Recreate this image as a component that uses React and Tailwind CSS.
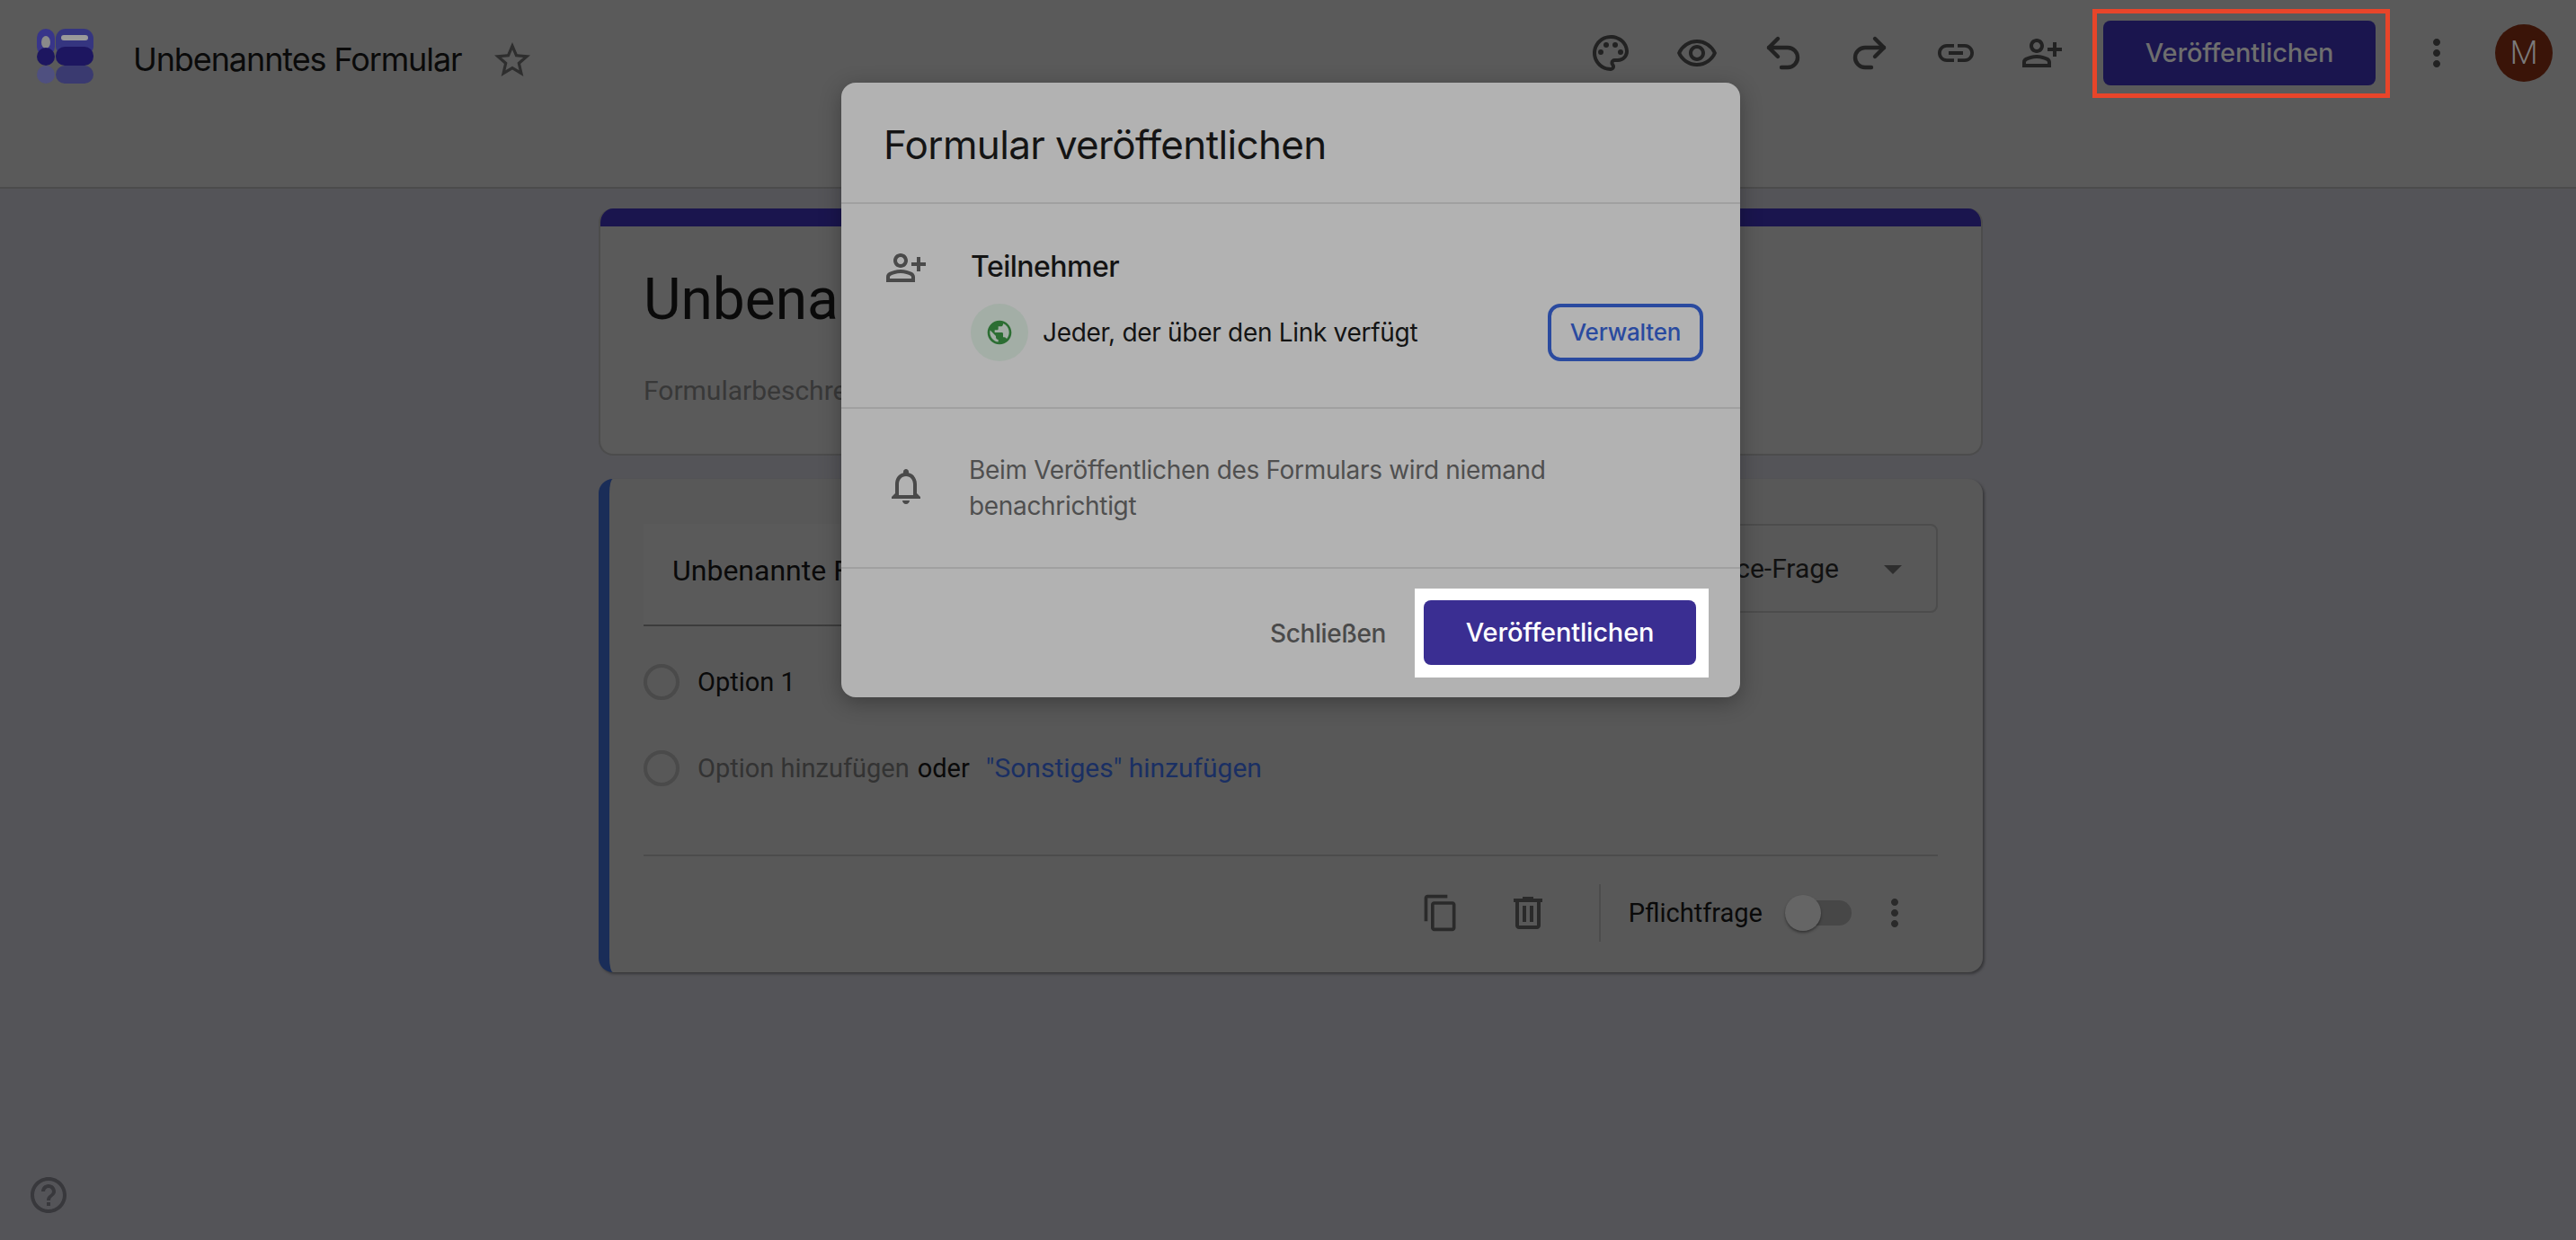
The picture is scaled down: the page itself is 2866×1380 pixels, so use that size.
import React from 'react';
import { Undo2, Redo2 } from 'lucide-react';
import {
  MdOutlinePalette,
  MdOutlineRemoveRedEye,
  MdLink,
  MdOutlinePersonAddAlt,
  MdMoreVert,
  MdStarBorder,
  MdOutlineContentCopy,
  MdOutlineNotifications,
  MdPublic,
  MdHelpOutline,
  MdArrowDropDown,
} from 'react-icons/md';

const sansHead = "font-['Inter','Liberation_Sans',sans-serif]";
const roboto = "font-['Roboto','Liberation_Sans',sans-serif]";

const Logo = () => (
  <svg width="63" height="61" viewBox="0 0 63 61" className="shrink-0">
    <rect x="0" y="0" width="20" height="30" rx="10" fill="#38358a" />
    <ellipse cx="10" cy="15" rx="5" ry="7" fill="#8a8a8a" />
    <rect x="21" y="0" width="42" height="30" rx="11" fill="#353580" />
    <rect x="27" y="7" width="30" height="6" rx="3" fill="#9a9a9a" />
    <rect x="0" y="21" width="20" height="20" rx="10" fill="#1d1660" />
    <rect x="21" y="20" width="42" height="21" rx="10" fill="#1d1660" />
    <rect x="0" y="41" width="20" height="20" rx="10" fill="#4f5080" />
    <rect x="21" y="41" width="42" height="20" rx="10" fill="#3a3a70" />
  </svg>
);

const TrashIcon = ({ className }) => (
  <svg width="48" height="48" viewBox="0 0 24 24" fill="currentColor" className={className}>
    <path d="M15 4V3H9v1H4v2h1v13c0 1.1.9 2 2 2h10c1.1 0 2-.9 2-2V6h1V4h-5zm2 15H7V6h10v13zM9 8h2v9H9zm4 0h2v9h-2z" />
  </svg>
);

const Radio = () => <div className="w-[40px] h-[40px] rounded-full border-[4px] border-[#4a4a4a] shrink-0" />;

export default function App() {
  return (
    <div className={`relative h-[1380px] w-full overflow-hidden bg-[#545458] ${roboto}`}>
      {/* Header */}
      <header className="flex items-center h-[210px] pb-[90px] bg-[#5a5a5a] border-b-2 border-[#4c4c4c]">
        <div className="ml-[41px] mt-[6px]">
          <Logo />
        </div>
        <span className={`ml-[44px] mt-[14px] text-[36px] leading-[48px] tracking-[-1.1px] text-[#0a0a0a] ${sansHead}`}>
          Unbenanntes Formular
        </span>
        <MdStarBorder className="ml-[32px] mt-[16px] text-[#2e2e2e]" size={48} />

        <div className="ml-auto flex items-center gap-[48px] text-[#222222]">
          <MdOutlinePalette size={48} />
          <MdOutlineRemoveRedEye size={48} />
          <Undo2 size={48} strokeWidth={2.2} />
          <Redo2 size={48} strokeWidth={2.2} />
          <MdLink size={48} />
          <MdOutlinePersonAddAlt size={48} />
        </div>
        <div className="ml-[32px] pl-[7px] pr-[11px] pt-[8px] pb-[9px] border-[5px] border-[#e8452a]">
          <button className={`w-[303px] h-[72px] rounded-[8px] bg-[#1a154e] text-[#6e6e6e] text-[29px] font-medium tracking-[-0.15px] ${sansHead}`}>
            Veröffentlichen
          </button>
        </div>
        <MdMoreVert className="ml-[28px] text-[#222222]" size={48} />
        <div className="ml-[41px] mr-[26px] w-[64px] h-[64px] rounded-full bg-[#3a1408] text-[#7a7a7a] text-[36px] font-light flex items-center justify-center">
          M
        </div>
      </header>

      {/* Form title card */}
      <section className="ml-[666px] w-[1540px] mt-[22px] h-[275px] rounded-[16px] overflow-hidden bg-[#5a5a5a] border-2 border-t-0 border-[#4c4c4c]">
        <div className="h-[20px] -mx-[2px] bg-[#1a154e]" />
        <div className="pl-[48px] pt-[42px]">
          <h1 className="text-[64px] leading-[80px] text-[#0a0a0a]">Unbenanntes Formular</h1>
          <p className="mt-[41px] text-[30px] leading-[40px] text-[#383838]">Formularbeschreibung</p>
        </div>
      </section>

      {/* Question card */}
      <section className="ml-[666px] w-[1540px] mt-[26px] h-[549px] rounded-[16px] bg-[#585858] border-l-[12px] border-l-[#1a2d58] pl-[38px] pr-[50px] pt-[50px] shadow-[2px_2px_3px_rgba(0,0,0,0.35)]">
        <div className="flex gap-[24px] items-start">
          <div className="flex-1 h-[114px] pl-[32px] pb-[8px] flex items-center bg-[#5a5a5a] border-b-2 border-[#3c3c3c] text-[32px] text-[#0a0a0a]">
            Unbenannte Frage
          </div>
          <div className="w-[456px] h-[99px] pr-[24px] flex items-center justify-end gap-[36px] rounded-[8px] border-2 border-[#4c4c4c] text-[30px] text-[#111111]">
            Multiple-Choice-Frage
            <MdArrowDropDown size={48} className="text-[#2e2e2e]" />
          </div>
        </div>

        <div className="mt-[42px] flex items-center gap-[20px] text-[29px] leading-[40px] text-[#0a0a0a]">
          <Radio />
          Option 1
        </div>
        <div className="mt-[56px] flex items-center text-[29px] leading-[40px]">
          <Radio />
          <span className="ml-[20px] text-[#333333]">Option hinzufügen</span>
          <span className="ml-[9px] text-[#0a0a0a]">oder</span>
          <span className="ml-[18px] text-[#1a2f63] text-[30px]">"Sonstiges" hinzufügen</span>
        </div>

        <div className="mt-[76px] h-[2px] bg-[#4c4c4c]" />

        <div className="mt-[31px] mr-[24px] flex items-center justify-end">
          <MdOutlineContentCopy size={44} className="text-[#2a2a2a]" />
          <TrashIcon className="ml-[51px] text-[#2a2a2a]" />
          <div className="ml-[55px] w-[2px] h-[64px] bg-[#4c4c4c]" />
          <span className="ml-[31px] text-[29px] leading-[40px] text-[#0a0a0a]">Pflichtfrage</span>
          <div className="relative ml-[25px] w-[74px] h-[40px]">
            <div className="absolute left-[4px] right-0 top-[6px] h-[28px] rounded-full bg-[#474747]" />
            <div className="absolute left-0 top-0 w-[40px] h-[40px] rounded-full bg-[#656565] shadow-[0_2px_3px_rgba(0,0,0,0.4)]" />
          </div>
          <MdMoreVert size={48} className="ml-[24px] text-[#2a2a2a]" />
        </div>
      </section>

      <MdHelpOutline size={48} className="absolute left-[30px] top-[1306px] text-[#38383c]" />

      {/* Publish dialog */}
      <div className="absolute left-[936px] top-[92px] w-[1000px] rounded-[16px] bg-[#b2b2b2] shadow-[0_6px_24px_rgba(0,0,0,0.3)]">
        <div className={`h-[133px] pl-[47px] pt-[4px] flex items-center text-[44px] tracking-[-0.65px] text-[#141414] ${sansHead}`}>
          Formular veröffentlichen
        </div>

        <div className="border-t-2 border-[#a0a0a0] pl-[48px] pr-[41px] pt-[50px] pb-[51px] flex items-start gap-[48px]">
          <MdOutlinePersonAddAlt size={48} className="-mt-[3px] text-[#4a4a4a] shrink-0" />
          <div className="flex-1">
            <div className={`text-[32px] leading-[40px] font-medium tracking-[-0.5px] text-[#141414] ${sansHead}`}>Teilnehmer</div>
            <div className="mt-[21px] flex items-center">
              <div className="w-[64px] h-[64px] rounded-full bg-[#a3aea6] flex items-center justify-center">
                <MdPublic size={32} className="text-[#2c6e33]" />
              </div>
              <span className={`ml-[16px] text-[28px] tracking-[-0.3px] text-[#141414] ${sansHead}`}>Jeder, der über den Link verfügt</span>
              <button className={`ml-auto w-[173px] h-[64px] pb-[2px] rounded-[14px] border-[4px] border-[#2a4a9f] text-[#2a4a9f] text-[26px] font-medium tracking-[-0.2px] ${sansHead}`}>
                Verwalten
              </button>
            </div>
          </div>
        </div>

        <div className="border-t-2 border-[#a0a0a0] pl-[48px] py-[48px] flex items-center gap-[46px]">
          <MdOutlineNotifications size={48} className="-mt-[4px] text-[#4a4a4a] shrink-0" />
          <p className={`w-[680px] text-[28px] leading-[40px] tracking-[-0.33px] text-[#4f4f4f] ${sansHead}`}>
            Beim Veröffentlichen des Formulars wird niemand benachrichtigt
          </p>
        </div>

        <div className="border-t-2 border-[#a0a0a0] h-[145px] pr-[35px] flex items-center justify-end gap-[32px]">
          <span className={`text-[28px] font-medium tracking-[-0.4px] text-[#4a4a4a] ${sansHead}`}>Schließen</span>
          <div className="bg-white pl-[10px] pr-[14px] pt-[13px] pb-[14px]">
            <button className={`w-[303px] h-[72px] rounded-[8px] bg-[#3a2e92] text-white text-[29px] font-medium tracking-[-0.15px] ${sansHead}`}>
              Veröffentlichen
            </button>
          </div>
        </div>
      </div>
    </div>
  );
}
